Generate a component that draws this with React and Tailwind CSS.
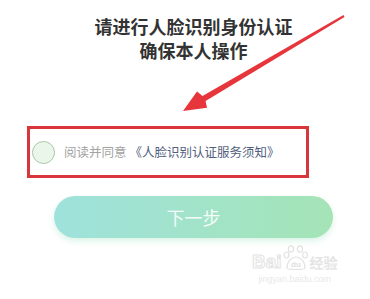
import React from "react";

export default function App() {
  return (
    <div className="relative w-[370px] h-[299px] bg-white overflow-hidden font-['Noto_Sans_CJK_SC','Noto_Sans',sans-serif]">
      <div className="ml-[17px] w-[353px] pt-[14px] text-center text-[18px] leading-[24px] font-bold text-[#333333]">
        <div>请进行人脸识别身份认证</div>
        <div>确保本人操作</div>
      </div>

      <div className="ml-[27px] mt-[64px] w-[282px] h-[52px] border-[3px] border-[#d8363c] flex items-center pl-[2px]">
        <div className="w-[23px] h-[23px] rounded-full border border-[#a9c7a9] bg-[#ebf6ea]" />
        <span className="ml-[9px] text-[12.5px] text-[#a3a3a3]">阅读并同意</span>
        <span className="ml-[3px] text-[12.5px] text-[#52607e]">《人脸识别认证服务须知》</span>
      </div>

      <div className="ml-[54px] mt-[18px] w-[279px] h-[42px] rounded-full bg-gradient-to-r from-[#9fe2dc] to-[#a4e4b6] shadow-[0_3px_6px_rgba(170,230,200,0.45)] flex items-center justify-center text-white/90 text-[18px]">
        下一步
      </div>

      <svg className="absolute inset-0 pointer-events-none" width="370" height="299" viewBox="0 0 370 299">
        <polygon
          points="343.5,15.1 202.5,96.0 197.0,91.6 183,111 207.0,107.8 205.6,101.0 344.5,16.9"
          fill="#e6353b"
        />
      </svg>

      <div className="absolute left-[252px] top-[244px] flex flex-col items-center pointer-events-none opacity-80">
        <div className="flex items-end">
          <span className="text-[19px] leading-[19px] font-bold text-white [-webkit-text-stroke:1px_#dcdcdc] font-['Liberation_Sans',sans-serif]">Bai</span>
          <svg width="26" height="27" viewBox="0 0 26 27" className="mx-[1px]">
            <g fill="none" stroke="#dcdcdc" strokeWidth="1.2">
              <ellipse cx="8" cy="5" rx="2.6" ry="3.2" />
              <ellipse cx="17" cy="5" rx="2.6" ry="3.2" />
              <ellipse cx="3.5" cy="11" rx="2.4" ry="3" />
              <ellipse cx="22" cy="11" rx="2.4" ry="3" />
              <path d="M4 24 C4 17 9 13 13 13 C17 13 22 17 22 24 C22 26 4 26 4 24 Z" />
            </g>
            <text x="13" y="23" textAnchor="middle" fontSize="8" fill="#d8d8d8" fontFamily="Liberation Sans, sans-serif" fontWeight="bold">du</text>
          </svg>
          <span className="text-[14px] leading-[18px] text-[#dedede] font-bold">经验</span>
        </div>
        <span className="mt-[3px] text-[9px] leading-[10px] text-[#e4e4e4] font-['Liberation_Sans',sans-serif]">jingyan.baidu.com</span>
      </div>
    </div>
  );
}
